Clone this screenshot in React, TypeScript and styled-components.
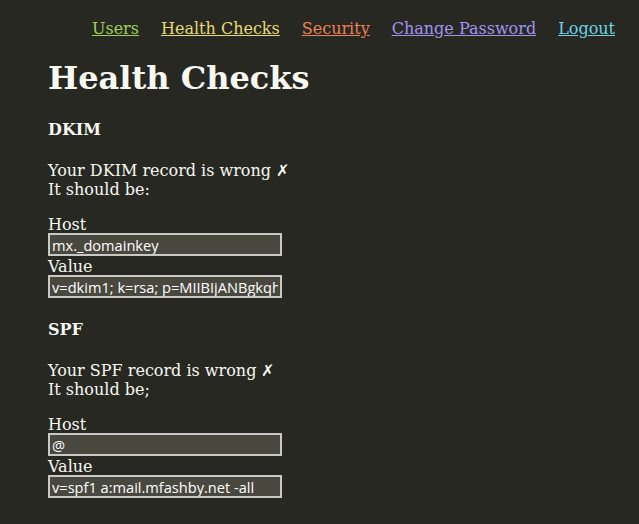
import React from "react";
import styled, { createGlobalStyle } from "styled-components";

const GlobalStyle = createGlobalStyle`
  html, body {
    margin: 0;
    background-color: #272822;
    color: #f8f8f2;
    font-family: "DejaVu Serif", serif;
    font-size: 16px;
  }
`;

const Page = styled.div`
  min-height: 524px;
  padding: 0 24px 0 48px;
`;

const Nav = styled.nav`
  display: flex;
  justify-content: flex-end;
  gap: 22px;
  padding-top: 18px;
  line-height: 22px;
`;

const NavLink = styled.a<{ $color: string }>`
  color: ${(p) => p.$color};
  text-decoration: underline;
`;

const Title = styled.h1`
  font-size: 32px;
  font-weight: bold;
  margin: 20px 0 0;
  line-height: 37px;
`;

const Section = styled.section`
  margin-top: 23px;

  & + & {
    margin-top: 22px;
  }
`;

const SectionTitle = styled.h4`
  font-size: 16px;
  font-weight: bold;
  margin: 0 0 22px;
  line-height: 19px;
`;

const Message = styled.p`
  margin: 0 0 16px;
  line-height: 19px;
`;

const Label = styled.label`
  display: block;
  line-height: 19px;
`;

const Field = styled.input`
  display: block;
  box-sizing: border-box;
  width: 234px;
  height: 23px;
  margin: -1px 0 1px;
  padding: 1px 2px;
  background-color: #49483e;
  color: #ffffff;
  border: 2px solid #c8c8c4;
  font-family: "Open Sans", "Noto Sans", sans-serif;
  font-size: 14.6px;
  outline: none;
`;

interface RecordProps {
  name: string;
  ending: string;
  host: string;
  value: string;
}

function RecordCheck({ name, ending, host, value }: RecordProps) {
  return (
    <Section>
      <SectionTitle>{name}</SectionTitle>
      <Message>
        Your {name} record is wrong ✗
        <br />
        It should be{ending}
      </Message>
      <Label>Host</Label>
      <Field readOnly value={host} />
      <Label>Value</Label>
      <Field readOnly value={value} />
    </Section>
  );
}

export default function App() {
  return (
    <Page>
      <GlobalStyle />
      <Nav>
        <NavLink $color="#a0d05e" href="#">Users</NavLink>
        <NavLink $color="#e6db74" href="#">Health Checks</NavLink>
        <NavLink $color="#ec8358" href="#">Security</NavLink>
        <NavLink $color="#a294f0" href="#">Change Password</NavLink>
        <NavLink $color="#6fd3e8" href="#">Logout</NavLink>
      </Nav>
      <Title>Health Checks</Title>
      <RecordCheck
        name="DKIM"
        ending=":"
        host="mx._domainkey"
        value="v=dkim1; k=rsa; p=MIIBIjANBgkqhkiG9w0BAQEFAAOCAQ8AMIIBCgKCAQEA"
      />
      <RecordCheck
        name="SPF"
        ending=";"
        host="@"
        value="v=spf1 a:mail.mfashby.net -all"
      />
    </Page>
  );
}
